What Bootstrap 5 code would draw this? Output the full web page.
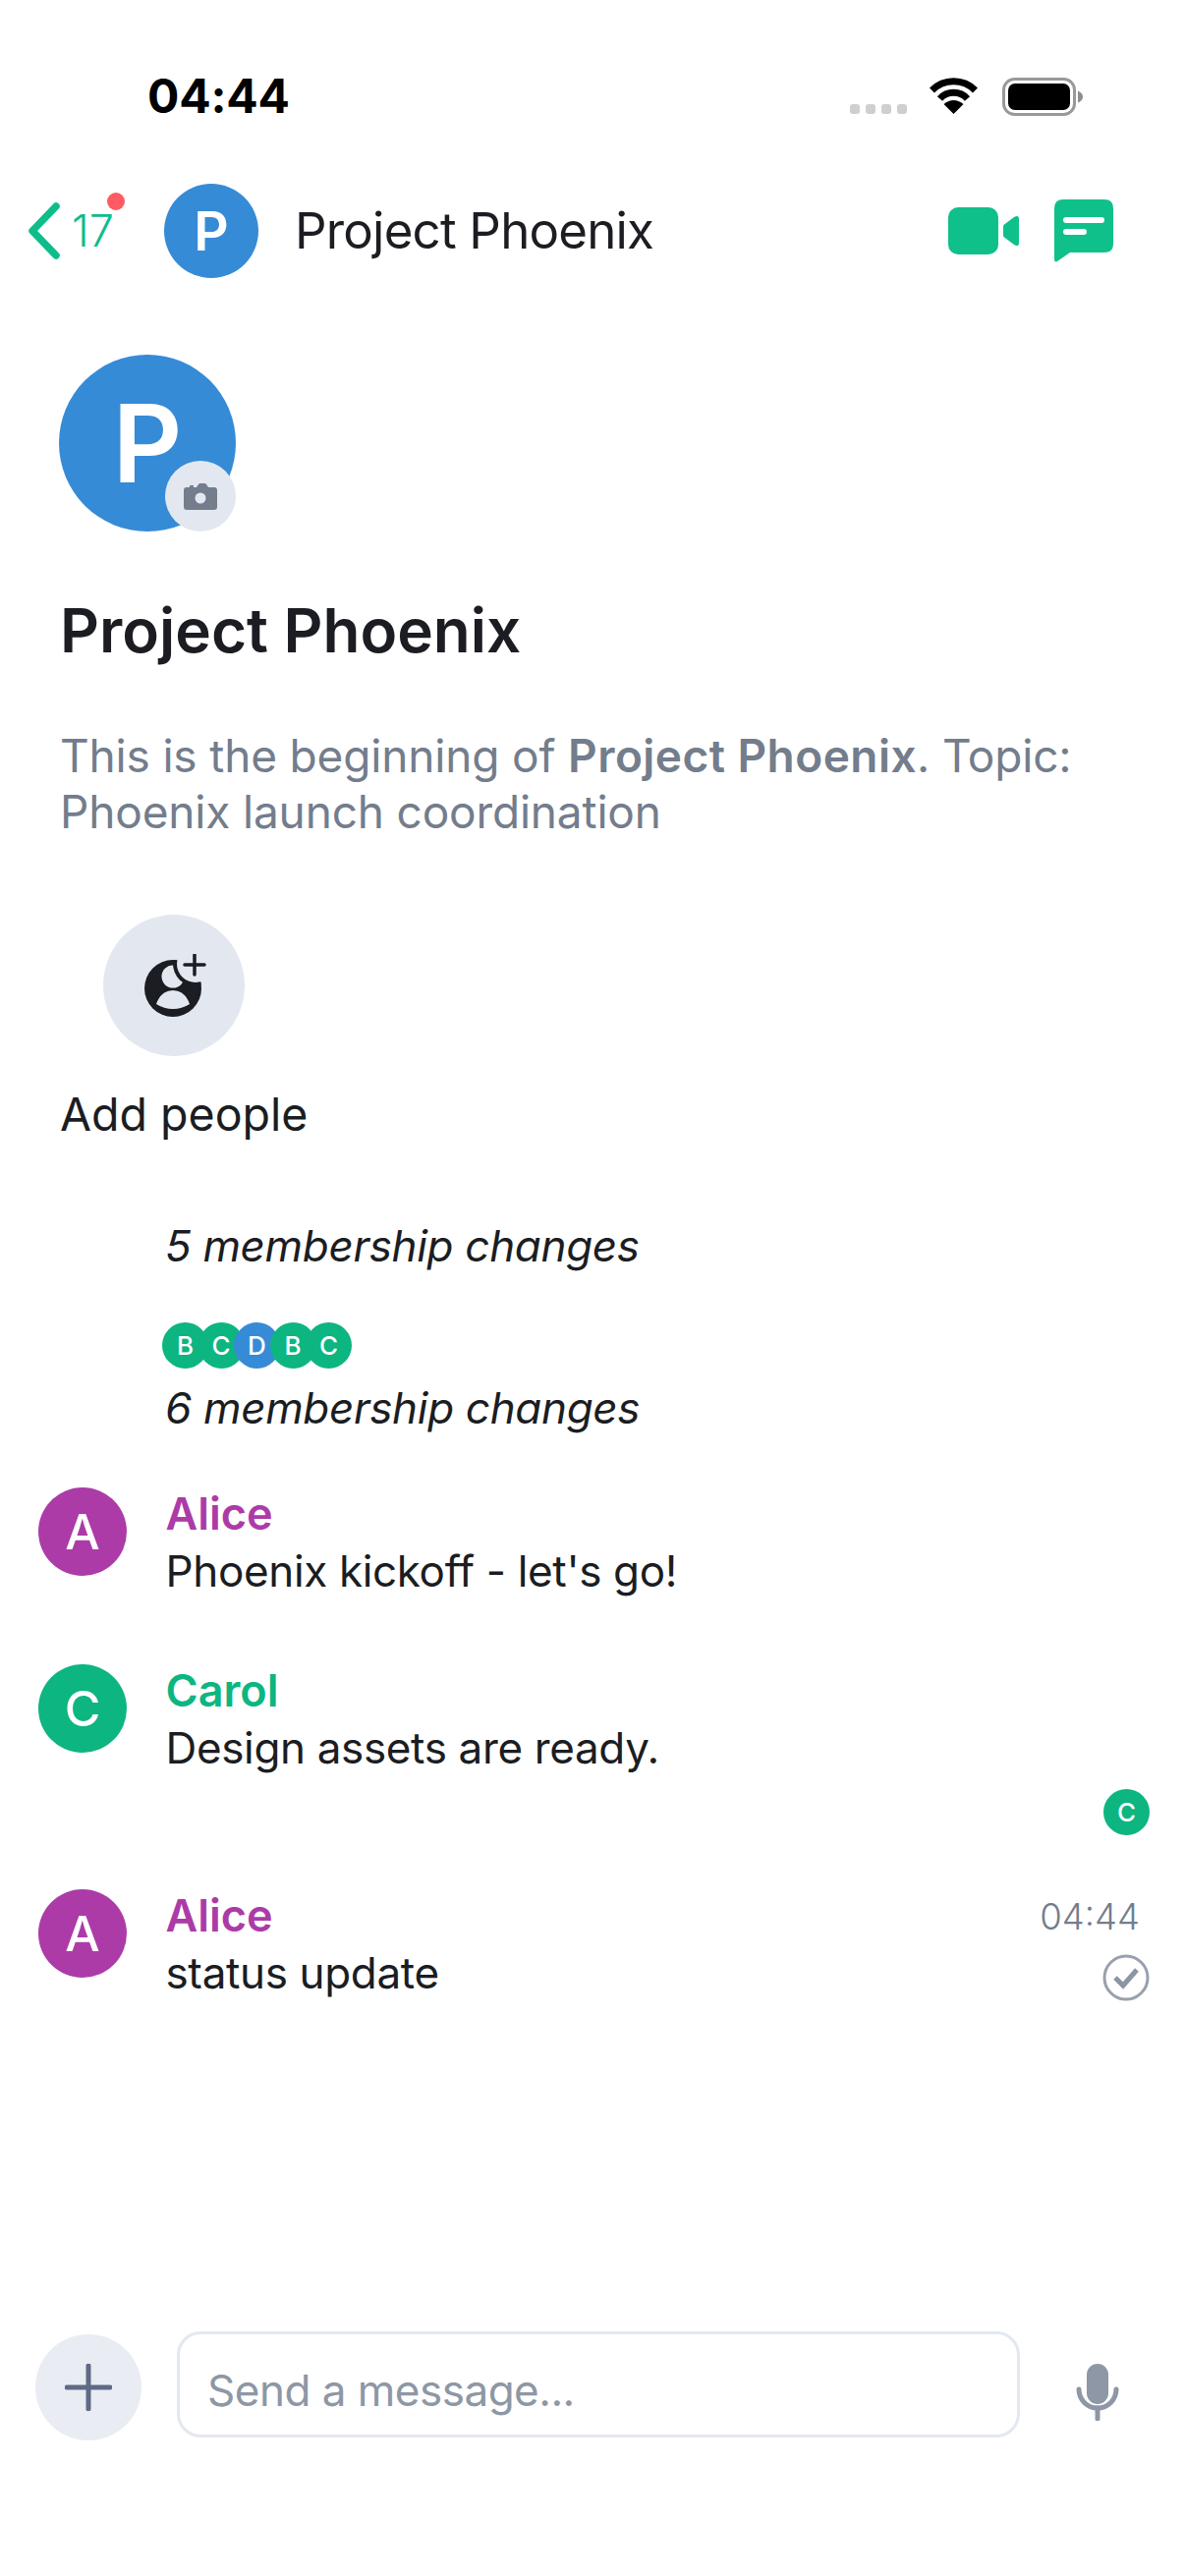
<!DOCTYPE html>
<html lang="en">
<head>
<meta charset="utf-8">
<title>Project Phoenix</title>
<link href="https://cdn.jsdelivr.net/npm/bootstrap@5.3.0/dist/css/bootstrap.min.css" rel="stylesheet">
<style>
html,body{margin:0;background:#fff}
body{font-family:Inter,"Noto Sans",sans-serif;color:#1b1d22;width:1206px;height:2622px;overflow:hidden}
.phone{width:1206px;height:2622px}
.status-row{height:187px;padding:70px 105px 0 150px}
.clock{font-size:48px;line-height:56px;font-weight:700;color:#000;letter-spacing:-.2px;width:715px;flex:none}
.status-icons{margin-top:9px}
.sig-dots{gap:6px;margin-top:27px;margin-right:22px}
.sig-dots i{display:block;width:10px;height:10px;border-radius:3px;background:#cfcfcf}
.top-row{height:96px;position:relative;padding:0 73px 0 28px}
.chev{width:34px;height:58px;flex:none}
.count{font-size:45px;line-height:50px;font-weight:300;color:#0dbd8b;margin-left:11px;width:92px;flex:none}
.red-pip{position:absolute;left:109px;top:9px;width:18px;height:18px;border-radius:50%;background:#ff5b63}
.ava{border-radius:50%;color:#fff;display:flex;align-items:center;justify-content:center;flex:none;font-weight:500}
.blue{background:#368bd6}.purple{background:#ac3ba8}.green{background:#0db581}
.ava-top{width:96px;height:96px;font-size:55px;margin-left:2px;font-weight:600}
.top-title{font-size:51px;line-height:60px;font-weight:400;margin-left:37px;letter-spacing:-.8px}
.vid{width:72px;height:48px;margin-right:36px;flex:none}
.chat{width:60px;height:64px;flex:none}
.intro{padding:78px 0 0 61px}
.big-wrap{width:180px;height:180px;position:relative;margin-left:-1px}
.ava-big{width:180px;height:180px;font-size:110px;font-weight:600}
.cam-pip{position:absolute;right:0;bottom:0;width:72px;height:72px;border-radius:50%;background:#e3e8f0;display:flex;align-items:center;justify-content:center}
.room-title{font-size:62px;line-height:72px;font-weight:600;margin:65px 0 0;color:#1b1d22}
.room-desc{font-size:46px;line-height:57px;color:#737d8c;margin:63px 0 0;width:1110px;letter-spacing:-.17px}
.room-desc b{font-weight:600;letter-spacing:.45px}
.add-circle{width:144px;height:144px;border-radius:50%;background:#e3e8f0;margin:76px 0 0 44px;display:flex;align-items:center;justify-content:center;padding-left:4px}
.add-label{font-size:46.500px;line-height:60px;margin-top:29px}
.changes{font-size:44px;line-height:58px;font-style:italic;padding-left:168px;letter-spacing:-.33px}
.stack{padding-left:165px;margin-top:49px;margin-bottom:11px}
.ava-s{width:47px;height:47px;font-size:26px}
.stack .ava-s+.ava-s{margin-left:-10.500px}
.gap-top{margin-top:75px}
.gap-bottom{margin-bottom:51px}
.msg{padding-left:39px;position:relative}
.msg-next{margin-top:65px}
.ava-m{width:90px;height:90px;font-size:50px;margin:1px 39.500px 0 0}
.who{font-size:45px;line-height:56px;font-weight:600}
.who.p{color:#ac3ba8}.who.g{color:#0db581}
.body-t{font-size:44px;line-height:58px;margin-top:1px;letter-spacing:-.35px}
.stamp{position:absolute;right:46px;top:1px;font-size:36.500px;line-height:56px;font-weight:300;color:#737d8c}
.tick{position:absolute;right:36px;top:67px;width:48px;height:48px}
.receipt{padding-right:36px;margin-top:13px;margin-bottom:54px}
.composer{margin-top:auto;padding:0 0 138px 36px}
.plus-btn{width:108px;height:108px;border-radius:50%;background:#e9ecf2;border:0;padding:0;margin-top:3px;display:flex;align-items:center;justify-content:center;flex:none}
.field{width:858px;height:108px;margin-left:36px;border:3px solid #e3e8f0;border-radius:24px;font-size:44px;line-height:58px;color:#8d97a5;padding:28px 28px 0;background:#fff;letter-spacing:-.5px}
.mic{width:44px;height:58px;margin:33px 0 0 57px;flex:none}
</style>
</head>
<body>
<div class="phone d-flex flex-column">
  <div class="status-row d-flex align-items-start">
    <div class="clock">04:44</div>
    <div class="status-icons d-flex">
      <div class="sig-dots d-flex"><i></i><i></i><i></i><i></i></div>
      <svg width="51" height="37" viewBox="0 0 51 37" class="me-4"><path d="M3.500 13a31 31 0 0 1 44 0M11.500 21.500a19 19 0 0 1 28 0" fill="none" stroke="#000" stroke-width="7"/><path d="M25.500 37L15.500 27Q25.500 19 35.500 27Z"/></svg>
      <svg width="82" height="39" viewBox="0 0 82 39"><rect x="1.500" y="1.500" width="72" height="36" rx="11" fill="none" stroke="#999" stroke-width="3"/><rect x="6" y="6" width="63" height="27" rx="7"/><path d="M77 13.500q5 2 5 6t-5 6Z" fill="#8e8e8e"/></svg>
    </div>
  </div>

  <div class="top-row d-flex align-items-center">
    <svg class="chev" viewBox="0 0 34 58"><path d="M29 4L5 29L29 54" fill="none" stroke="#0dbd8b" stroke-width="7.500" stroke-linecap="round" stroke-linejoin="round"/></svg>
    <div class="count">17</div>
    <span class="red-pip"></span>
    <div class="ava blue ava-top">P</div>
    <div class="top-title me-auto">Project Phoenix</div>
    <svg class="vid" viewBox="0 0 72 48"><rect width="51" height="48" rx="10" fill="#10c08a"/><path d="M57 17.500L67 10q5-3 5 2v24q0 5-5 2L57 30.500q-1-1-1-2v-9q0-1 1-2Z" fill="#10c08a"/></svg>
    <svg class="chat" viewBox="0 0 60 64"><path d="M9 0H51q9 0 9 9V45q0 9-9 9H16L3 63q-3 1.500-3-2V9Q0 0 9 0Z" fill="#10c08a"/><rect x="9" y="18" width="42" height="6" rx="3" fill="#fff"/><rect x="9" y="30" width="24" height="6" rx="3" fill="#fff"/></svg>
  </div>

  <div class="intro">
    <div class="big-wrap">
      <div class="ava blue ava-big">P</div>
      <span class="cam-pip"><svg width="34" height="27" viewBox="0 0 34 27"><path d="M3 4h3V2h4v2h3l2-3q.5-1 2-1h4q1.500 0 2 1l2 3h6q3 0 3 3v17q0 3-3 3H3q-3 0-3-3V7q0-3 3-3Z" fill="#737d8c"/><circle cx="17" cy="15" r="5.500" fill="#e3e8f0"/></svg></span>
    </div>
    <h1 class="room-title">Project Phoenix</h1>
    <div class="room-desc">
      <div>This is the beginning of <b>Project Phoenix</b>. Topic:</div>
      <div>Phoenix launch coordination</div>
    </div>
    <div class="add-circle">
      <svg width="64" height="64" viewBox="0 0 64 64">
        <defs><clipPath id="ball"><circle cx="29" cy="35" r="29"/></clipPath></defs>
        <circle cx="29" cy="35" r="29" fill="#1b1d22"/>
        <ellipse cx="29" cy="23" rx="11.500" ry="11.500" fill="#e3e8f0"/>
        <circle cx="52" cy="10" r="23" fill="#1b1d22" clip-path="url(#ball)"/>
        <circle cx="52" cy="10" r="19" fill="#e3e8f0"/>
        <path d="M12 51Q17 37 29 37Q41 37 46 51Q38 56 29 56Q20 56 12 51Z" fill="#e3e8f0"/>
        <path d="M51 1V21M41 11H61" stroke="#1b1d22" stroke-width="3.500" stroke-linecap="round" fill="none"/>
      </svg>
    </div>
    <div class="add-label">Add people</div>
  </div>

  <div class="changes gap-top">5 membership changes</div>
  <div class="stack d-flex">
    <div class="ava green ava-s">B</div><div class="ava green ava-s">C</div><div class="ava blue ava-s">D</div><div class="ava green ava-s">B</div><div class="ava green ava-s">C</div>
  </div>
  <div class="changes gap-bottom">6 membership changes</div>

  <div class="msg d-flex">
    <div class="ava purple ava-m">A</div>
    <div><div class="who p">Alice</div><div class="body-t">Phoenix kickoff - let's go!</div></div>
  </div>
  <div class="msg msg-next d-flex">
    <div class="ava green ava-m">C</div>
    <div><div class="who g">Carol</div><div class="body-t">Design assets are ready.</div></div>
  </div>
  <div class="receipt d-flex justify-content-end"><div class="ava green ava-s">C</div></div>
  <div class="msg d-flex">
    <div class="ava purple ava-m">A</div>
    <div><div class="who p">Alice</div><div class="body-t">status update</div></div>
    <div class="stamp">04:44</div>
    <svg class="tick" viewBox="0 0 48 48"><circle cx="24" cy="24" r="22" fill="none" stroke="#98a1ad" stroke-width="3"/><path d="M13 24l8 8L35 16" fill="none" stroke="#8c95a3" stroke-width="5"/></svg>
  </div>

  <div class="composer d-flex align-items-start">
    <button class="plus-btn" type="button" aria-label="Add"><svg width="48" height="48" viewBox="0 0 48 48"><path d="M24 2V46M2 24H46" stroke="#5f6b85" stroke-width="5" stroke-linecap="round" fill="none"/></svg></button>
    <div class="field form-control">Send a message...</div>
    <svg class="mic" viewBox="0 0 44 58"><rect x="11" y="0" width="22" height="41" rx="11" fill="#8d97a5"/><path d="M3 26a19 19 0 0 0 38 0" fill="none" stroke="#8d97a5" stroke-width="5" stroke-linecap="round"/><path d="M22 45V56" stroke="#8d97a5" stroke-width="5" stroke-linecap="round"/></svg>
  </div>
</div>
<script src="https://cdn.jsdelivr.net/npm/bootstrap@5.3.0/dist/js/bootstrap.bundle.min.js"></script>
</body>
</html>
